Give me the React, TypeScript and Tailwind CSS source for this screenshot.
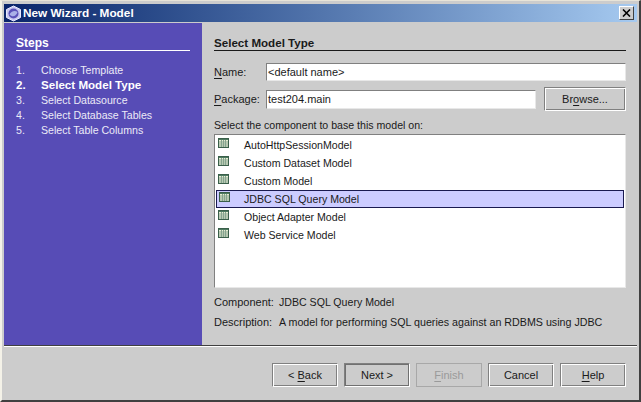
import type { ReactNode } from "react";

const STEPS = ["Choose Template", "Select Model Type", "Select Datasource", "Select Database Tables", "Select Table Columns"];
const MODELS = ["AutoHttpSessionModel", "Custom Dataset Model", "Custom Model", "JDBC SQL Query Model", "Object Adapter Model", "Web Service Model"];

const bevelBtn = "flex h-[24px] items-center justify-center border border-t-[#808080] border-l-[#808080] border-r-white border-b-white bg-[#cccccc] shadow-[inset_1px_1px_0_#fff,inset_-1px_-1px_0_#808080]";

function TableIcon() {
  return (
    <svg width="11" height="10" viewBox="0 0 11 10" className="shrink-0">
      <rect x="0.5" y="0.5" width="10" height="9" fill="#e8eed4" stroke="#3a5f4a" />
      <rect x="1" y="1" width="9" height="1" fill="#4d7a60" />
      <path d="M1 4h9M1 6h9M1 8h9M3.5 2v7M5.5 2v7M7.5 2v7" stroke="#86a48f" strokeWidth="1" />
    </svg>
  );
}

function WizardIcon() {
  return (
    <svg width="17" height="17" viewBox="0 0 17 17" className="shrink-0">
      <path d="M8.5 1 15.5 4.5V12.5L8.5 16 1.5 12.5V4.5Z" fill="#c8c8f0" stroke="#e8e8ff" />
      <circle cx="8.5" cy="8.5" r="5" fill="#5a50b8" />
      <path d="M4.5 9.5C6 6 10 5 12.5 7 11.5 11 7.5 13 4.5 9.5Z" fill="#aab0e8" />
    </svg>
  );
}

function Button({ children, className = "" }: { children: ReactNode; className?: string }) {
  return <div className={`${bevelBtn} w-[66px] ${className}`}><span>{children}</span></div>;
}

function Mnemonic({ children }: { children: string }) {
  return <span className="underline underline-offset-2">{children}</span>;
}

export default function App() {
  return (
    <div className="flex h-[402px] w-[641px] flex-col overflow-hidden border-t-[1px] border-r-[2px] border-b-[2px] border-l-[2px] border-t-[#e8e4d8] border-r-[#404040] border-b-[#404040] border-l-[#f4f2e8] bg-[#cccccc] pt-[3px] pr-[2px] pl-[2px] text-[11px] leading-[14px] text-[#1a1a1a] [font-family:'Liberation_Sans',Arial,sans-serif]">
      <div className="flex h-[18px] shrink-0 items-center bg-gradient-to-r from-[#0a246a] to-[#a6caf0] pr-[3px] pl-[1px]">
        <WizardIcon />
        <span className="ml-[1px] flex-1 text-[11.8px] font-bold text-white">New Wizard - Model</span>
        <div className="flex h-[14px] w-[15px] items-center justify-center border border-t-white border-l-white border-r-[#404040] border-b-[#404040] bg-[#cccccc]">
          <svg width="9" height="8" viewBox="0 0 9 8">
            <path d="M1 0.5 8 7.5M8 0.5 1 7.5" stroke="#000" strokeWidth="1.6" />
          </svg>
        </div>
      </div>

      <div className="mt-[1px] flex h-[322px] shrink-0">
        <div className="w-[198px] shrink-0 bg-[#574cb6] px-[12px] pt-[14px] text-[#eceaf6]">
          <div className="border-b border-white text-[12px] leading-[13px] font-bold text-white">Steps</div>
          <div className="mt-[11px] flex flex-col">
            {STEPS.map((step, i) => (
              <div key={step} className={`flex h-[15px] items-center ${i === 1 ? "text-[11.6px] font-bold text-white" : "text-[10.6px]"}`}>
                <span className="w-[25px]">{i + 1}.</span>
                <span>{step}</span>
              </div>
            ))}
          </div>
        </div>

        <div className="min-w-0 flex-1 pt-[13px] pr-[11px] pl-[12px]">
          <div className="border-b border-[#1a1a1a] pb-[1px] text-[11.6px] leading-[13px] font-bold">Select Model Type</div>
          <div className="mt-[12px] flex items-center">
            <span className="w-[52px]"><Mnemonic>N</Mnemonic>ame:</span>
            <div className="flex h-[18px] flex-1 items-center border border-t-[#808080] border-l-[#808080] border-r-[#e8e8e8] border-b-[#e8e8e8] bg-white pl-[1px]">&lt;default name&gt;</div>
          </div>
          <div className="mt-[6px] flex items-center">
            <span className="w-[52px]"><Mnemonic>P</Mnemonic>ackage:</span>
            <div className="flex h-[19px] w-[270px] items-center border border-t-[#808080] border-l-[#808080] border-r-[#e8e8e8] border-b-[#e8e8e8] bg-white pl-[1px]">test204.main</div>
            <div className={`${bevelBtn} ml-[8px] flex-1`}><span>Br<Mnemonic>o</Mnemonic>wse...</span></div>
          </div>
          <div className="mt-[7px] text-[10.6px]">Select the component to base this model on:</div>
          <div className="mt-[2px] h-[154px] border border-t-[#808080] border-l-[#808080] border-r-[#e8e8e8] border-b-[#e8e8e8] bg-white p-[1px]">
            {MODELS.map((model, i) => (
              <div key={model} className={`flex h-[18px] items-center pl-[2px] text-[10.6px] ${i === 3 ? "border border-[#1a1a50] bg-[#ccccff] pl-[1px]" : ""}`}>
                <div className="-mt-[4px]"><TableIcon /></div>
                <span className={i === 3 ? "ml-[14px]" : "ml-[15px]"}>{model}</span>
              </div>
            ))}
          </div>
          <div className="mt-[7px] flex">
            <span className="w-[65px]">Component:</span>
            <span className="text-[10.6px]">JDBC SQL Query Model</span>
          </div>
          <div className="mt-[6px] flex">
            <span className="w-[65px]">Description:</span>
            <span className="text-[10.7px]">A model for performing SQL queries against an RDBMS using JDBC</span>
          </div>
        </div>
      </div>

      <div className="h-[2px] shrink-0 border-t border-b border-t-[#404040] border-b-white" />

      <div className="mt-[16px] flex justify-end gap-[6px] pr-[11px]">
        <Button>&lt; <Mnemonic>B</Mnemonic>ack</Button>
        <Button className="outline outline-1 -outline-offset-2 outline-[#707070]">Next &gt;</Button>
        <div className="flex h-[24px] w-[66px] items-center justify-center border border-[#a8a8a8] bg-[#cccccc] text-[#9a9a9a]"><span><Mnemonic>F</Mnemonic>inish</span></div>
        <Button>Cancel</Button>
        <Button><Mnemonic>H</Mnemonic>elp</Button>
      </div>
    </div>
  );
}
